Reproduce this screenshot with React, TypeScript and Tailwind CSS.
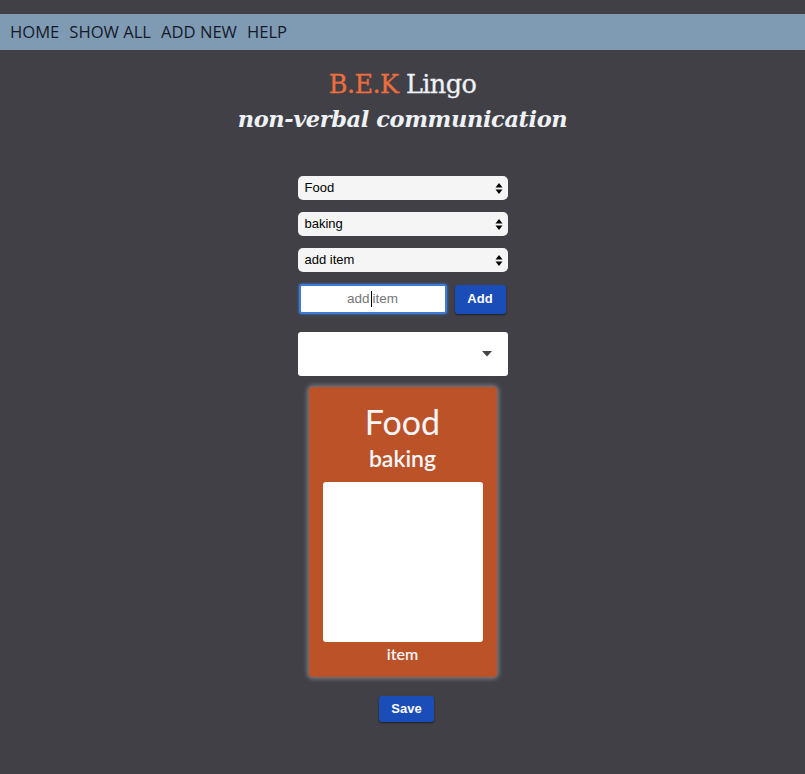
import React from "react";

const sans = { fontFamily: '"Liberation Sans", Arial, sans-serif' };

function UpDown() {
  return (
    <svg width="8" height="13" viewBox="0 0 8 13" className="text-black">
      <path d="M4 1 L7.5 5.5 H0.5 Z" fill="currentColor" />
      <path d="M4 12 L7.5 7.5 H0.5 Z" fill="currentColor" />
    </svg>
  );
}

function FakeSelect({ label }: { label: string }) {
  return (
    <div
      className="flex h-6 w-[210px] items-center justify-between rounded-[5px] bg-[#f5f5f5] pl-[7px] pr-[5px] text-[13px] text-black"
      style={sans}
    >
      <span>{label}</span>
      <UpDown />
    </div>
  );
}

export default function App() {
  return (
    <div className="min-h-[774px] w-full bg-[#404046] pt-[14px]">
      <nav
        className="flex h-9 items-center gap-[10px] bg-[#7f9bb3] px-[10px] text-[16.6px] text-[#15192a]"
        style={{ fontFamily: '"Open Sans", "Noto Sans", sans-serif' }}
      >
        <a>HOME</a>
        <a>SHOW ALL</a>
        <a>ADD NEW</a>
        <a>HELP</a>
      </nav>

      <header
        className="mt-[16px] flex flex-col items-center text-[#eef2f7]"
        style={{ fontFamily: '"DejaVu Serif", "Liberation Serif", serif' }}
      >
        <h1 className="text-[25.5px] leading-[36px] tracking-[-0.6px] [-webkit-text-stroke:0.3px]">
          <span className="text-[#ee6d3c]">B.E.K</span> Lingo
        </h1>
        <h2 className="text-[22.5px] font-bold italic leading-[34px] tracking-[-0.4px]">
          non-verbal communication
        </h2>
      </header>

      <main className="mt-[40px] flex flex-col items-center">
        <div className="flex flex-col gap-3">
          <FakeSelect label="Food" />
          <FakeSelect label="baking" />
          <FakeSelect label="add item" />
        </div>

        <div className="mt-3 flex w-[210px] items-center justify-between pl-[1px] pr-[2px]" style={sans}>
          <div className="flex h-[30px] w-[148px] items-center justify-center rounded-[3px] border-2 border-[#3f7ad6] bg-white text-[13.5px] text-[#777] shadow-[0_0_2px_1px_rgba(63,122,214,0.5)]">
            add <span className="mx-[1px] inline-block h-[16px] w-[1px] bg-black" />item
          </div>
          <button className="h-[29px] w-[51px] rounded-[3px] bg-[#1a4db8] text-[13px] font-bold text-white shadow-[0_1px_2px_rgba(0,0,0,0.5)]">
            Add
          </button>
        </div>

        <div className="mt-[18px] flex h-[44px] w-[210px] items-center justify-end rounded-[3px] bg-white pr-[16px]">
          <svg width="10" height="6" viewBox="0 0 10 6">
            <path d="M0 0 H10 L5 5.5 Z" fill="#444" />
          </svg>
        </div>

        <section
          className="mt-[11px] flex h-[290px] w-[188px] flex-col items-center rounded-[4px] bg-[#bc5227] text-[#f3f5fa] shadow-[0_0_4px_2px_rgba(170,170,180,0.55)]"
          style={{ fontFamily: 'Lato, "Open Sans", sans-serif' }}
        >
          <div className="mt-[16px] text-[34px] leading-[38px]">Food</div>
          <div className="mt-[3px] text-[23px] font-semibold leading-[28px]">baking</div>
          <div className="mt-[10px] h-[160px] w-[160px] rounded-[3px] bg-white" />
          <div className="mt-[1px] text-[16px] font-semibold leading-[22px]">item</div>
        </section>

        <button
          className="ml-2 mt-[19px] h-[26px] w-[55px] rounded-[3px] bg-[#1a4db8] text-[13px] font-bold text-white shadow-[0_1px_2px_rgba(0,0,0,0.5)]"
          style={sans}
        >
          Save
        </button>
      </main>
    </div>
  );
}
